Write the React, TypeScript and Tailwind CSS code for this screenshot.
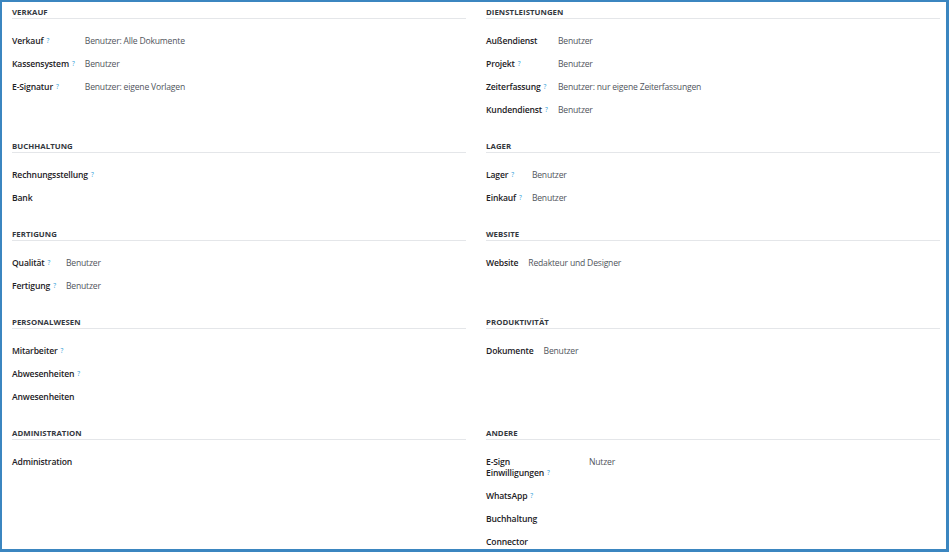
import React from 'react';

type Row = { label: string; help?: boolean; value?: string };
type Section = { title: string; rows: Row[]; labelCol?: string };

const sections: Section[][] = [
  [
    {
      title: 'Verkauf',
      rows: [
        { label: 'Verkauf', help: true, value: 'Benutzer: Alle Dokumente' },
        { label: 'Kassensystem', help: true, value: 'Benutzer' },
        { label: 'E-Signatur', help: true, value: 'Benutzer: eigene Vorlagen' },
      ],
    },
    {
      title: 'Dienstleistungen',
      rows: [
        { label: 'Außendienst', value: 'Benutzer' },
        { label: 'Projekt', help: true, value: 'Benutzer' },
        { label: 'Zeiterfassung', help: true, value: 'Benutzer: nur eigene Zeiterfassungen' },
        { label: 'Kundendienst', help: true, value: 'Benutzer' },
      ],
    },
  ],
  [
    {
      title: 'Buchhaltung',
      rows: [{ label: 'Rechnungsstellung', help: true }, { label: 'Bank' }],
    },
    {
      title: 'Lager',
      rows: [
        { label: 'Lager', help: true, value: 'Benutzer' },
        { label: 'Einkauf', help: true, value: 'Benutzer' },
      ],
    },
  ],
  [
    {
      title: 'Fertigung',
      rows: [
        { label: 'Qualität', help: true, value: 'Benutzer' },
        { label: 'Fertigung', help: true, value: 'Benutzer' },
      ],
    },
    {
      title: 'Website',
      rows: [{ label: 'Website', value: 'Redakteur und Designer' }],
    },
  ],
  [
    {
      title: 'Personalwesen',
      rows: [
        { label: 'Mitarbeiter', help: true },
        { label: 'Abwesenheiten', help: true },
        { label: 'Anwesenheiten' },
      ],
    },
    {
      title: 'Produktivität',
      rows: [{ label: 'Dokumente', value: 'Benutzer' }],
    },
  ],
  [
    {
      title: 'Administration',
      rows: [{ label: 'Administration' }],
    },
    {
      title: 'Andere',
      labelCol: 'fixed',
      rows: [
        { label: 'E-Sign Einwilligungen', help: true, value: 'Nutzer' },
        { label: 'WhatsApp', help: true },
        { label: 'Buchhaltung' },
        { label: 'Connector' },
      ],
    },
  ],
];

const Help = () => (
  <sup className="ml-[3px] text-[6.5px] font-normal tracking-normal text-[#1f9ad6] relative -top-[1.5px]">?</sup>
);

const Group: React.FC<{ section: Section }> = ({ section }) => (
  <div className="pt-[5px] pb-[14px]">
    <div className="h-[12px] border-b border-[#e4e6e9] text-[7.8px] leading-[11px] font-bold uppercase tracking-[0.05px] text-[#33383e]">
      {section.title}
    </div>
    <div
      className={`mt-[11px] grid gap-x-[10px] ${
        section.labelCol === 'fixed' ? 'grid-cols-[93px_1fr]' : 'grid-cols-[auto_1fr]'
      }`}
    >
      {section.rows.map((r) => (
        <React.Fragment key={r.label}>
          <div className="py-[6px] text-[8.6px] leading-[11px] font-semibold tracking-[-0.15px] text-[#1d2125]">
            <span className={section.labelCol === 'fixed' ? 'block max-w-[80px]' : ''}>
              {r.label}
              {r.help && <Help />}
            </span>
          </div>
          <div className="py-[6px] text-[8.6px] leading-[11px] tracking-[-0.2px] text-[#50555c]">{r.value ?? ''}</div>
        </React.Fragment>
      ))}
    </div>
  </div>
);

export default function App() {
  return (
    <div
      className="w-[949px] h-[552px] overflow-hidden bg-white border-t-2 border-l-2 border-r-[3px] border-b-[3px] border-[#3b86c0]"
      style={{ fontFamily: '"Open Sans", "Noto Sans", sans-serif' }}
    >
      <div className="grid grid-cols-2 gap-x-5 pl-[10px] pr-[6px]">
        {sections.map((pair, i) => (
          <React.Fragment key={i}>
            <Group section={pair[0]} />
            <Group section={pair[1]} />
          </React.Fragment>
        ))}
      </div>
    </div>
  );
}
